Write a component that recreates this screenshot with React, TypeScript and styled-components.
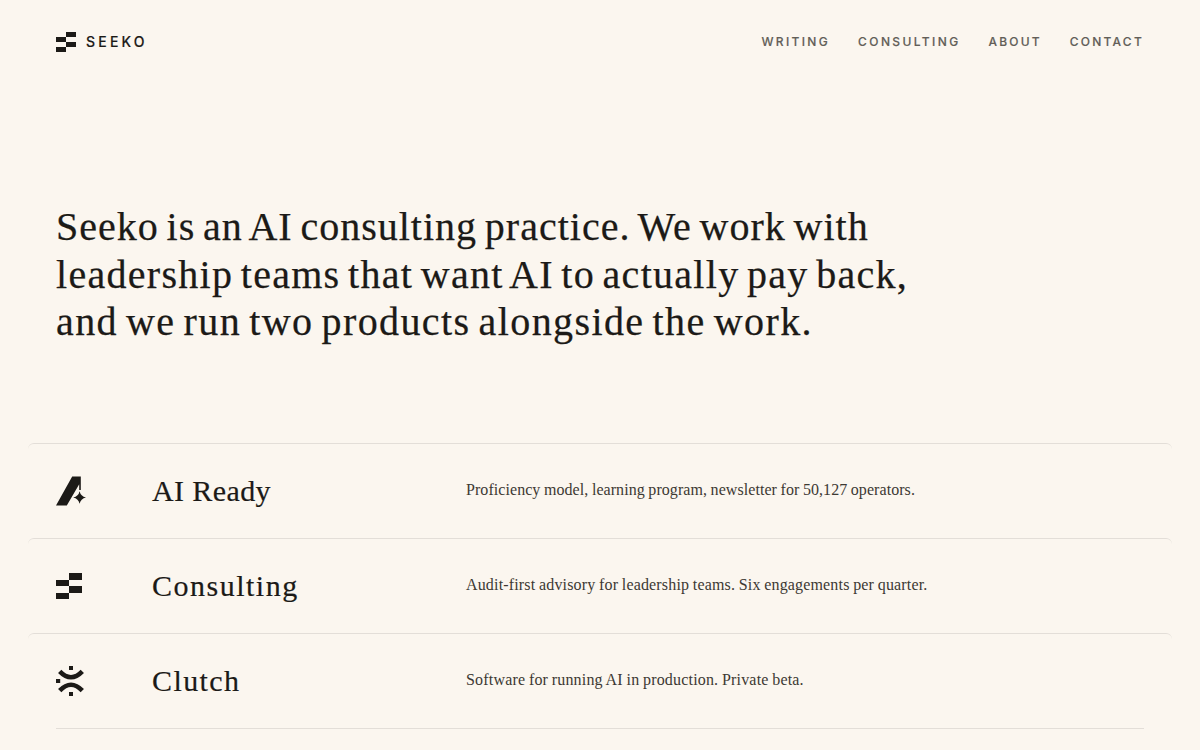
import React from "react";
import styled, { createGlobalStyle } from "styled-components";

const GlobalStyle = createGlobalStyle`
  * { box-sizing: border-box; }
  html, body { margin: 0; background: #fbf6ef; }
  body { height: 750px; overflow: hidden; color: #1c1a17; }
`;

const serif = `"Liberation Serif", "Times New Roman", serif`;
const sans = `Inter, "Liberation Sans", sans-serif`;

const Page = styled.div`
  height: 750px;
  padding: 0 56px;
  overflow: hidden;
`;

const Header = styled.header`
  display: flex;
  align-items: center;
  justify-content: space-between;
  height: 84px;
`;

const Brand = styled.a`
  display: flex;
  align-items: center;
  gap: 10px;
  font: 500 14px/20px ${sans};
  letter-spacing: 3.2px;
  color: #1c1a17;
  -webkit-text-stroke: 0.15px #1c1a17;
`;

const Nav = styled.nav`
  display: flex;
  gap: 28px;
`;

const NavLink = styled.a<{ $tracking: number }>`
  font: 500 12px/20px ${sans};
  letter-spacing: ${(p) => p.$tracking}px;
  color: #625e58;
  -webkit-text-stroke: 0.15px #625e58;
`;

const Intro = styled.h1`
  height: 240px;
  margin: 119px 0 0;
  font: 400 40px/47.5px ${serif};
  -webkit-text-stroke: 0.25px #1c1a17;
  white-space: nowrap;
`;

const IntroLine = styled.span<{ $tracking: number; $wordGap: number }>`
  display: block;
  width: max-content;
  letter-spacing: ${(p) => p.$tracking}px;
  word-spacing: ${(p) => p.$wordGap}px;
`;

const List = styled.div`
  border-bottom: 1px solid #e3ded8;
`;

const Row = styled.a`
  display: grid;
  grid-template-columns: 96px 314px 1fr;
  align-items: center;
  height: 95px;
  margin: 0 -28px;
  padding: 0 28px;
  border-top: 1px solid #e3ded8;
  border-radius: 6px;
`;

const IconCell = styled.span`
  display: flex;
  align-items: center;
  height: 32px;
`;

const Name = styled.span<{ $tracking: number }>`
  width: max-content;
  font: 400 30px/36px ${serif};
  letter-spacing: ${(p) => p.$tracking}px;
  -webkit-text-stroke: 0.2px #1c1a17;
`;

const Description = styled.span<{ $tracking: number }>`
  width: max-content;
  padding-bottom: 2px;
  font: 400 16px/22px ${serif};
  letter-spacing: ${(p) => p.$tracking}px;
  word-spacing: -0.5px;
  color: #3d3933;
`;

const SeekoMark = ({ size }: { size: number }) => (
  <svg width={size} height={size} viewBox="0 0 20 20" fill="#1c1a17" shapeRendering="crispEdges">
    <path d="M10 0h10v5H10zM0 5h10v5H0zM10 10h10v5H10zM0 15h10v5H0z" />
  </svg>
);

const ReadyMark = () => (
  <svg width="30" height="30" viewBox="0 0 30 30" fill="#1c1a17">
    <path d="M16.2.5H24.8v13.6h-1.6V8.2L10.8 29.5H0z" />
    <path d="M23.6 15.2q1.1 5.1 6.4 6.2-5.3 1.1-6.4 6.4-1.1-5.3-6.4-6.4 5.3-1.1 6.4-6.2z" />
  </svg>
);

const ClutchMark = () => (
  <svg width="30" height="30" viewBox="0 0 30 30" fill="#1c1a17">
    <path d="M13 0h4v4h-4zM0 13h4.2v4H0zM13 26h4v4h-4z" />
    <path
      d="M3.7 5.3Q15 17.1 26.3 5.3M3.7 24.7Q15 12.9 26.3 24.7"
      fill="none"
      stroke="#1c1a17"
      strokeWidth="4.6"
    />
  </svg>
);

const links = [
  { label: "WRITING", tracking: 2.35 },
  { label: "CONSULTING", tracking: 2.4 },
  { label: "ABOUT", tracking: 2.15 },
  { label: "CONTACT", tracking: 2.25 },
];

const intro = [
  { text: "Seeko is an AI consulting practice. We work with", tracking: 1, wordGap: -3.2 },
  { text: "leadership teams that want AI to actually pay back,", tracking: 1.28, wordGap: -3.7 },
  { text: "and we run two products alongside the work.", tracking: 1.4, wordGap: -3.3 },
];

const offerings = [
  {
    icon: <ReadyMark />,
    name: "AI Ready",
    nameTracking: 0.4,
    text: "Proficiency model, learning program, newsletter for 50,127 operators.",
    tracking: 0.06,
  },
  {
    icon: <SeekoMark size={26} />,
    name: "Consulting",
    nameTracking: 1.5,
    text: "Audit-first advisory for leadership teams. Six engagements per quarter.",
    tracking: 0.16,
  },
  {
    icon: <ClutchMark />,
    name: "Clutch",
    nameTracking: 1.4,
    text: "Software for running AI in production. Private beta.",
    tracking: 0.18,
  },
];

export default function App() {
  return (
    <Page>
      <GlobalStyle />
      <Header>
        <Brand>
          <SeekoMark size={20} />
          SEEKO
        </Brand>
        <Nav>
          {links.map((link) => (
            <NavLink key={link.label} $tracking={link.tracking}>
              {link.label}
            </NavLink>
          ))}
        </Nav>
      </Header>
      <Intro>
        {intro.map((line) => (
          <IntroLine key={line.text} $tracking={line.tracking} $wordGap={line.wordGap}>
            {line.text}
          </IntroLine>
        ))}
      </Intro>
      <List>
        {offerings.map((item) => (
          <Row key={item.name}>
            <IconCell>{item.icon}</IconCell>
            <Name $tracking={item.nameTracking}>{item.name}</Name>
            <Description $tracking={item.tracking}>{item.text}</Description>
          </Row>
        ))}
      </List>
    </Page>
  );
}
